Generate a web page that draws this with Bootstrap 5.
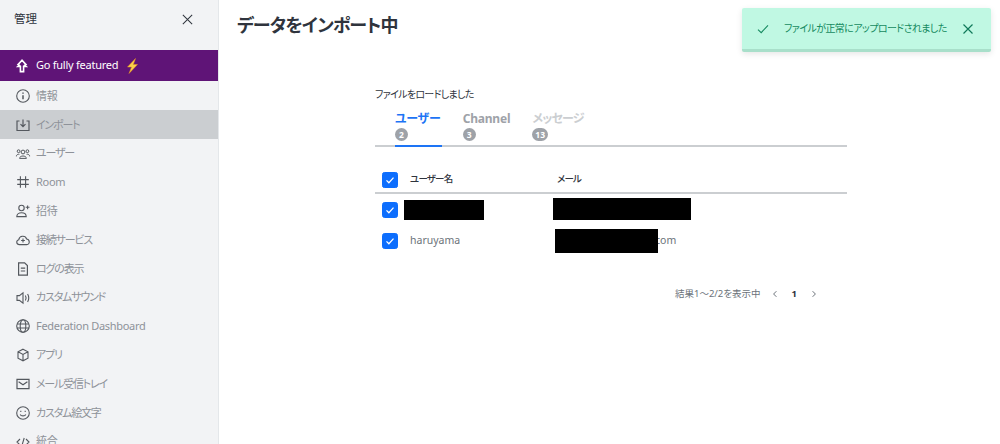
<!DOCTYPE html>
<html lang="ja">
<head>
    <meta charset="UTF-8">
    <title>データをインポート中</title>
    <link href="https://cdn.jsdelivr.net/npm/bootstrap@5.3.0/dist/css/bootstrap.min.css" rel="stylesheet">
    <style>
        html, body { height: 100%; overflow: hidden; }
        body { font-family: "Noto Sans", "Noto Sans CJK JP", sans-serif; font-feature-settings: "palt"; background: #fff; color: #2f343d; }
        .side-panel { width: 219px; height: 444px; background: #f2f3f5; border-right: 1px solid #e4e7ea; overflow: hidden; flex-shrink: 0; }
        .side-head { height: 50px; padding: 0 25px 12px 14px; font-size: 11.5px; color: #2f343d; }
        .side-close { width: 11px; height: 11px; color: #2f343d; }
        .promo-row { height: 31px; background: #5f1477; color: #fff; font-size: 11px; letter-spacing: -.25px; padding-left: 16px; gap: 8px; }
        .side-row { height: 28.8px; padding: 1px 0 0 15px; gap: 5px; font-size: 11px; letter-spacing: -.3px; color: #8e9299; }
        .side-row svg { width: 16px; height: 16px; flex-shrink: 0; color: #54585e; }
        .side-row.kana-row { letter-spacing: -1.2px; }
        .side-row.is-active { background: #cbced1; height: 29px; }
        .main-pane { min-width: 0; position: relative; }
        .page-title { font-size: 18px; font-weight: 700; letter-spacing: -.8px; color: #2f343d; padding: 13px 0 0 18px; line-height: 25px; margin: 0; }
        .import-box { width: 472px; margin: 49px 0 0 156px; }
        .loaded-text { font-size: 10px; letter-spacing: -.7px; color: #2f343d; line-height: 14px; margin-bottom: 9px; }
        .tab-strip { border-bottom: 2px solid #cbced1; height: 37px; padding-left: 20px; gap: 21px; }
        .tab-item { font-size: 12px; font-weight: 700; letter-spacing: -.2px; line-height: 17px; color: #9ea2a8; height: 37px; margin-bottom: -2px; padding-right: 1px; }
        .tab-item.is-on { color: #1d74f5; border-bottom: 2px solid #1d74f5; }
        .tab-item.is-off { color: #cbced1; letter-spacing: -.8px; }
        .tab-count { display: block; width: max-content; min-width: 13px; height: 13px; margin-top: 1px; padding: 0 3px; border-radius: 7px; background: #9ea2a8; color: #fff; font-size: 8.5px; letter-spacing: 0; line-height: 13px; text-align: center; }
        .user-table { margin: 20px 0 0; font-size: 10.5px; color: #6c737a; }
        .user-table th, .user-table td { padding: 0; border: 0; vertical-align: middle; background: transparent; color: inherit; box-shadow: none; }
        .user-table thead tr { height: 26px; border-bottom: 2px solid #cbced1; }
        .user-table th { font-size: 9.5px; font-weight: 500; letter-spacing: -.8px; color: #2f343d; }
        .user-table tbody tr { height: 33px; }
        .user-table tbody tr.row-two { height: 30px; }
        .check-col { width: 35px; }
        .name-col { width: 147px; }
        .pick-box { width: 16px; height: 16px; margin: 0 0 0 7px; display: block; border-radius: 2px; background-size: 100%; }
        .pick-box:checked[type=checkbox] { background-image: url("data:image/svg+xml,%3csvg xmlns='http://www.w3.org/2000/svg' viewBox='0 0 20 20'%3e%3cpath fill='none' stroke='%23fff' stroke-width='1.8' d='M5 10.5l3.4 3.4L15 6.5'/%3e%3c/svg%3e"); }
        .black-out { display: inline-block; background: #000; vertical-align: middle; position: relative; }
        .cover-a { width: 80px; height: 20px; margin-left: -6px; }
        .cover-b { width: 138px; height: 22px; margin-left: -4px; margin-top: -2px; }
        .cover-c { width: 103px; height: 24px; margin-left: -2px; margin-right: -3px; }
        .pager-row { margin-top: 31px; padding-right: 29px; font-size: 9.5px; color: #6c737a; gap: 10px; line-height: 14px; }
        .pager-row svg { width: 8px; height: 8px; color: #6c737a; }
        .pager-now { font-weight: 700; color: #2f343d; margin: 0 3px; }
        .done-toast { position: absolute; top: 8px; right: 9px; width: 249px; height: 44px; background: #c0f8e3; border-radius: 2px; border-bottom: 3px solid #a8dfca; box-shadow: 0 2px 6px rgba(0,0,0,.1); color: #158a60; font-size: 10px; letter-spacing: -.6px; padding: 0 17px 0 15px; white-space: nowrap; }
        .done-toast .tick { width: 12px; height: 12px; margin-right: 15px; }
        .done-toast .shut { width: 12px; height: 12px; color: #10795a; margin-left: auto; }
    </style>
</head>
<body>

<div class="d-flex">
    <aside class="side-panel">
        <div class="side-head d-flex align-items-center justify-content-between">
            <span>管理</span>
            <svg class="side-close" viewBox="0 0 13 13" fill="none" stroke="currentColor" stroke-width="1.2"><path d="M1 1l11 11M12 1L1 12"/></svg>
        </div>
        <div class="promo-row d-flex align-items-center">
            <svg width="12" height="14" viewBox="0 0 12 14" fill="none" stroke="#fff" stroke-width="1.6"><path d="M6 1.2L2 5.6l1.4.8L2 7.5h2.4V12.6h3.2V7.5H10L8.6 6.4 10 5.6z"/></svg>
            <span>Go fully featured</span>
            <svg width="13" height="16" viewBox="0 0 13 16"><path d="M9.5 0.5L1.5 9h4L3 15.5 11.5 6.5h-4.2z" fill="#f9d24a" stroke="#e8941a" stroke-width=".5"/></svg>
        </div>
        <div class="side-row d-flex align-items-center">
            <svg viewBox="0 0 16 16" fill="none" stroke="currentColor" stroke-width="1.1"><circle cx="8" cy="8" r="6.3"/><path d="M8 7.2v4M8 4.6v1.1" stroke-width="1.5"/></svg>
            <span>情報</span>
        </div>
        <div class="side-row kana-row is-active d-flex align-items-center">
            <svg viewBox="0 0 16 16" fill="none" stroke="currentColor" stroke-width="1.2"><path d="M4.5 4H2v9.5h12V4h-2.5M8 2.5v7M5.5 7.2L8 9.7l2.5-2.5"/></svg>
            <span>インポート</span>
        </div>
        <div class="side-row kana-row d-flex align-items-center">
            <svg viewBox="0 0 16 16" fill="none" stroke="currentColor" stroke-width="1"><circle cx="8" cy="6" r="1.9"/><circle cx="3.6" cy="5.2" r="1.4"/><circle cx="12.4" cy="5.2" r="1.4"/><path d="M4.6 12.4c0-3.2 6.8-3.2 6.8 0zM1.4 10.4c0-1.9 1.6-2.4 3-2.1M14.6 10.4c0-1.9-1.6-2.4-3-2.1"/></svg>
            <span>ユーザー</span>
        </div>
        <div class="side-row d-flex align-items-center">
            <svg viewBox="0 0 16 16" fill="none" stroke="currentColor" stroke-width="1.1"><path d="M5.4 2.2v11.6M10.6 2.2v11.6M2.2 5.6h11.6M2.2 10.4h11.6"/></svg>
            <span>Room</span>
        </div>
        <div class="side-row d-flex align-items-center">
            <svg viewBox="0 0 16 16" fill="none" stroke="currentColor" stroke-width="1.1"><circle cx="6.5" cy="5" r="2.7"/><path d="M1.8 13.6c0-5.2 9.4-5.2 9.4 0zM12.6 2.4v3.8M10.7 4.3h3.8"/></svg>
            <span>招待</span>
        </div>
        <div class="side-row kana-row d-flex align-items-center">
            <svg viewBox="0 0 16 16" fill="none" stroke="currentColor" stroke-width="1.1"><path d="M4.4 12.6C1.2 12.6.8 8.4 3.8 7.7 4.4 3.5 10.4 3 11.6 7c3.4.2 3.6 5.6.2 5.6zM8 6.6v3.8M6.1 8.5h3.8"/></svg>
            <span>接続サービス</span>
        </div>
        <div class="side-row kana-row d-flex align-items-center">
            <svg viewBox="0 0 16 16" fill="none" stroke="currentColor" stroke-width="1.2"><path d="M3.6 1.8h6L12.4 4.6v9.6H3.6zM5.8 7.2h4.4M5.8 10h4.4"/></svg>
            <span>ログの表示</span>
        </div>
        <div class="side-row kana-row d-flex align-items-center">
            <svg viewBox="0 0 16 16" fill="none" stroke="currentColor" stroke-width="1.1"><path d="M2 5.6h2.4L8 2.8v10.4L4.4 10.4H2zM10.4 5.6c.8 1.4.8 3.4 0 4.8M12.6 4c1.4 2.4 1.4 5.6 0 8"/></svg>
            <span>カスタムサウンド</span>
        </div>
        <div class="side-row d-flex align-items-center">
            <svg viewBox="0 0 16 16" fill="none" stroke="currentColor" stroke-width="1.1"><circle cx="8" cy="8" r="6.3"/><ellipse cx="8" cy="8" rx="2.8" ry="6.3"/><path d="M2 6h12M2 10h12"/></svg>
            <span>Federation Dashboard</span>
        </div>
        <div class="side-row kana-row d-flex align-items-center">
            <svg viewBox="0 0 16 16" fill="none" stroke="currentColor" stroke-width="1.1"><path d="M8 2.2l5 2.6v6.4l-5 2.6-5-2.6V4.8zM3 4.8l5 2.6 5-2.6M8 7.4v6.4"/></svg>
            <span>アプリ</span>
        </div>
        <div class="side-row kana-row d-flex align-items-center">
            <svg viewBox="0 0 16 16" fill="none" stroke="currentColor" stroke-width="1.2"><path d="M2 3.4h12v9.2H2zM3.6 5.8L8 8.8l4.4-3"/></svg>
            <span>メール受信トレイ</span>
        </div>
        <div class="side-row kana-row d-flex align-items-center">
            <svg viewBox="0 0 16 16" fill="none" stroke="currentColor" stroke-width="1.1"><circle cx="8" cy="8" r="6.3"/><path d="M5.2 9.4c.9 2 4.7 2 5.6 0M5.8 5.8v1.2M10.2 5.8v1.2"/></svg>
            <span>カスタム絵文字</span>
        </div>
        <div class="side-row d-flex align-items-center">
            <svg viewBox="0 0 16 16" fill="none" stroke="currentColor" stroke-width="1.1"><path d="M5 5L2 8l3 3M11 5l3 3-3 3M9.2 4l-2.4 8"/></svg>
            <span>統合</span>
        </div>
    </aside>

    <main class="main-pane flex-grow-1">
        <h1 class="page-title">データをインポート中</h1>

        <div class="import-box">
            <div class="loaded-text">ファイルをロードしました</div>
            <div class="tab-strip d-flex">
                <div class="tab-item is-on">ユーザー<span class="tab-count">2</span></div>
                <div class="tab-item">Channel<span class="tab-count">3</span></div>
                <div class="tab-item is-off">メッセージ<span class="tab-count">13</span></div>
            </div>

            <table class="table user-table">
                <thead>
                    <tr>
                        <th class="check-col"><input class="form-check-input pick-box" type="checkbox" checked></th>
                        <th class="name-col">ユーザー名</th>
                        <th>メール</th>
                    </tr>
                </thead>
                <tbody>
                    <tr>
                        <td class="check-col"><input class="form-check-input pick-box" type="checkbox" checked></td>
                        <td><span class="black-out cover-a"></span></td>
                        <td><span class="black-out cover-b"></span></td>
                    </tr>
                    <tr class="row-two">
                        <td class="check-col"><input class="form-check-input pick-box" type="checkbox" checked></td>
                        <td>haruyama</td>
                        <td><span class="black-out cover-c"></span>com</td>
                    </tr>
                </tbody>
            </table>

            <div class="pager-row d-flex align-items-center justify-content-end">
                <span>結果1～2/2を表示中</span>
                <svg viewBox="0 0 8 8" fill="none" stroke="currentColor"><path d="M5.4 1.2L2.6 4l2.8 2.8"/></svg>
                <span class="pager-now">1</span>
                <svg viewBox="0 0 8 8" fill="none" stroke="currentColor"><path d="M2.6 1.2L5.4 4 2.6 6.8"/></svg>
            </div>
        </div>

        <div class="done-toast d-flex align-items-center" role="alert">
            <svg class="tick" viewBox="0 0 12 12" fill="none" stroke="currentColor" stroke-width="1.1"><path d="M1 6.6l3.2 3L11 2.4"/></svg>
            <span>ファイルが正常にアップロードされました</span>
            <svg class="shut" viewBox="0 0 12 12" fill="none" stroke="currentColor" stroke-width="1.2"><path d="M1.5 1.5l9 9M10.5 1.5l-9 9"/></svg>
        </div>
    </main>
</div>

<script src="https://cdn.jsdelivr.net/npm/bootstrap@5.3.0/dist/js/bootstrap.bundle.min.js"></script>
</body>
</html>
